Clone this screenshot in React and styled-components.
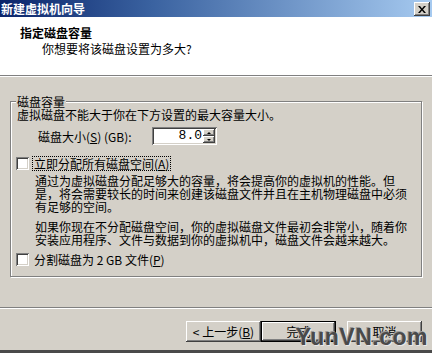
import React from 'react'
import styled, { createGlobalStyle, css } from 'styled-components'

const GlobalStyle = createGlobalStyle`
  html, body {
    margin: 0;
    padding: 0;
    background: #d4d0c8;
  }
  body {
    font-family: "Noto Sans CJK SC", "DejaVu Sans", sans-serif;
    font-size: 12px;
    color: #000;
  }
`

const raised = css`
  box-shadow:
    inset -1px -1px 0 #404040,
    inset 1px 1px 0 #fff,
    inset -2px -2px 0 #808080,
    inset 2px 2px 0 #d4d0c8;
`

const sunken = css`
  box-shadow:
    inset 1px 1px 0 #808080,
    inset -1px -1px 0 #fff,
    inset 2px 2px 0 #404040,
    inset -2px -2px 0 #d4d0c8;
`

const Window = styled.div`
  position: relative;
  width: 432px;
  height: 353px;
  background: #d4d0c8;
  display: flex;
  flex-direction: column;
  overflow: hidden;
  border-bottom: 3px solid #4a4a4a;
  box-sizing: border-box;
`

const TitleBar = styled.div`
  height: 17px;
  flex: none;
  display: flex;
  align-items: center;
  justify-content: space-between;
  background: linear-gradient(to right, #0a246a 0%, #3a62a0 35%, #a6caf0 100%);
  padding: 0 2px 0 1px;
`

const Title = styled.span`
  color: #fff;
  font-weight: bold;
  font-size: 12px;
  line-height: 17px;
`

const CloseButton = styled.div`
  width: 16px;
  height: 14px;
  background: #d4d0c8;
  ${raised};
  display: flex;
  align-items: center;
  justify-content: center;
  margin-top: 1px;
`

const Header = styled.div`
  height: 58px;
  flex: none;
  background: #fff;
  padding: 9px 0 0 20px;
  box-sizing: border-box;
`

const HeaderTitle = styled.div`
  font-weight: bold;
  line-height: 14px;
`

const HeaderSub = styled.div`
  margin: 2px 0 0 22px;
  line-height: 14px;
`

const Separator = styled.div`
  flex: none;
  height: 0;
  border-top: 1px solid #808080;
  border-bottom: 1px solid #fff;
`

const Body = styled.div`
  flex: 1;
  padding: 18px 10px 0 10px;
`

const GroupBox = styled.fieldset`
  margin: 0;
  padding: 0 0 10px 5px;
  border: 1px solid #808080;
  box-shadow: 1px 1px 0 #fff, inset 1px 1px 0 #fff;
  min-width: 0;
`

const Legend = styled.legend`
  padding: 0 1px;
  line-height: 13px;
  background: #d4d0c8;
`

const Text = styled.div`
  line-height: 13px;
  margin: ${p => p.$m || 0};
  white-space: nowrap;
`

const SizeRow = styled.div`
  display: flex;
  align-items: center;
  margin: 6px 0 0 22px;
`

const SizeLabel = styled.span`
  width: 114px;
  flex: none;
`

const SpinField = styled.div`
  width: 65px;
  height: 18px;
  background: #fff;
  ${sunken};
  display: flex;
  align-items: stretch;
  padding: 2px;
  box-sizing: border-box;
`

const SpinValue = styled.span`
  flex: 1;
  text-align: right;
  line-height: 14px;
  padding-right: 1px;
  font-family: "Liberation Mono", "DejaVu Sans Mono", monospace;
  font-size: 13px;
`

const SpinButtons = styled.div`
  width: 12px;
  display: flex;
  flex-direction: column;
`

const SpinButton = styled.div`
  flex: 1;
  background: #d4d0c8;
  ${raised};
  display: flex;
  align-items: center;
  justify-content: center;
  &::after {
    content: '';
    border-left: 2px solid transparent;
    border-right: 2px solid transparent;
    ${p => (p.$down ? 'border-top: 2px solid #000;' : 'border-bottom: 2px solid #000;')}
  }
`

const CheckRow = styled.div`
  display: flex;
  align-items: center;
  gap: 4px;
  margin: ${p => p.$m || 0};
  line-height: 13px;
`

const Box = styled.span`
  width: 13px;
  height: 13px;
  flex: none;
  background: #fff;
  ${sunken};
`

const CheckLabel = styled.span`
  padding: 0 1px;
  outline: ${p => (p.$focus ? '1px dotted #000' : 'none')};
`

const Paragraph = styled.div`
  margin: ${p => p.$m};
  padding-left: 19px;
  line-height: 13px;
  white-space: nowrap;
`

const Footer = styled.div`
  height: 41px;
  flex: none;
  display: flex;
  justify-content: flex-end;
  align-items: flex-start;
  padding: 12px 10px 0 0;
  box-sizing: border-box;
`

const ButtonPair = styled.div`
  display: flex;
  margin-right: 11px;
`

const Button = styled.div`
  width: 75px;
  height: 21px;
  box-sizing: border-box;
  background: #d4d0c8;
  display: flex;
  align-items: center;
  justify-content: center;
  line-height: 13px;
  ${raised};
  ${p => p.$default && css`
    border: 1px solid #000;
  `}
`

const Watermark = styled.div`
  position: absolute;
  right: 4px;
  bottom: 1px;
  font-family: "Liberation Sans", Arial, sans-serif;
  font-weight: bold;
  font-size: 23px;
  line-height: 24px;
  letter-spacing: 0.5px;
  color: #4a4a4a;
  text-shadow: 1px 1px 0 #e8e8e8, -1px -1px 0 #9a9a9a;
`

export default function App() {
  return (
    <>
      <GlobalStyle />
      <Window>
        <TitleBar>
          <Title>新建虚拟机向导</Title>
          <CloseButton>
            <svg width="8" height="7" viewBox="0 0 8 7">
              <path d="M0 0h2l2 2.5L6 0h2L5 3.5 8 7H6L4 4.5 2 7H0l3-3.5z" fill="#000" />
            </svg>
          </CloseButton>
        </TitleBar>
        <Header>
          <HeaderTitle>指定磁盘容量</HeaderTitle>
          <HeaderSub>你想要将该磁盘设置为多大?</HeaderSub>
        </Header>
        <Separator />
        <Body>
          <GroupBox>
            <Legend>磁盘容量</Legend>
            <Text $m="0 0 0 1px">虚拟磁盘不能大于你在下方设置的最大容量大小。</Text>
            <SizeRow>
              <SizeLabel>磁盘大小(<u>S</u>) (GB):</SizeLabel>
              <SpinField>
                <SpinValue>8.0</SpinValue>
                <SpinButtons>
                  <SpinButton />
                  <SpinButton $down />
                </SpinButtons>
              </SpinField>
            </SizeRow>
            <CheckRow $m="12px 0 0 0">
              <Box />
              <CheckLabel $focus>立即分配所有磁盘空间(<u>A</u>)</CheckLabel>
            </CheckRow>
            <Paragraph $m="4px 0 0 0">
              通过为虚拟磁盘分配足够大的容量，将会提高你的虚拟机的性能。但<br />
              是，将会需要较长的时间来创建该磁盘文件并且在主机物理磁盘中必须<br />
              有足够的空间。
            </Paragraph>
            <Paragraph $m="7px 0 0 0">
              如果你现在不分配磁盘空间，你的虚拟磁盘文件最初会非常小，随着你<br />
              安装应用程序、文件与数据到你的虚拟机中，磁盘文件会越来越大。
            </Paragraph>
            <CheckRow $m="7px 0 0 0">
              <Box />
              <CheckLabel>分割磁盘为 2 GB 文件(<u>P</u>)</CheckLabel>
            </CheckRow>
          </GroupBox>
        </Body>
        <Separator />
        <Footer>
          <ButtonPair>
            <Button>&lt; 上一步(<u>B</u>)</Button>
            <Button $default>完成</Button>
          </ButtonPair>
          <Button>取消</Button>
        </Footer>
        <Watermark>YunVN.com</Watermark>
      </Window>
    </>
  )
}
